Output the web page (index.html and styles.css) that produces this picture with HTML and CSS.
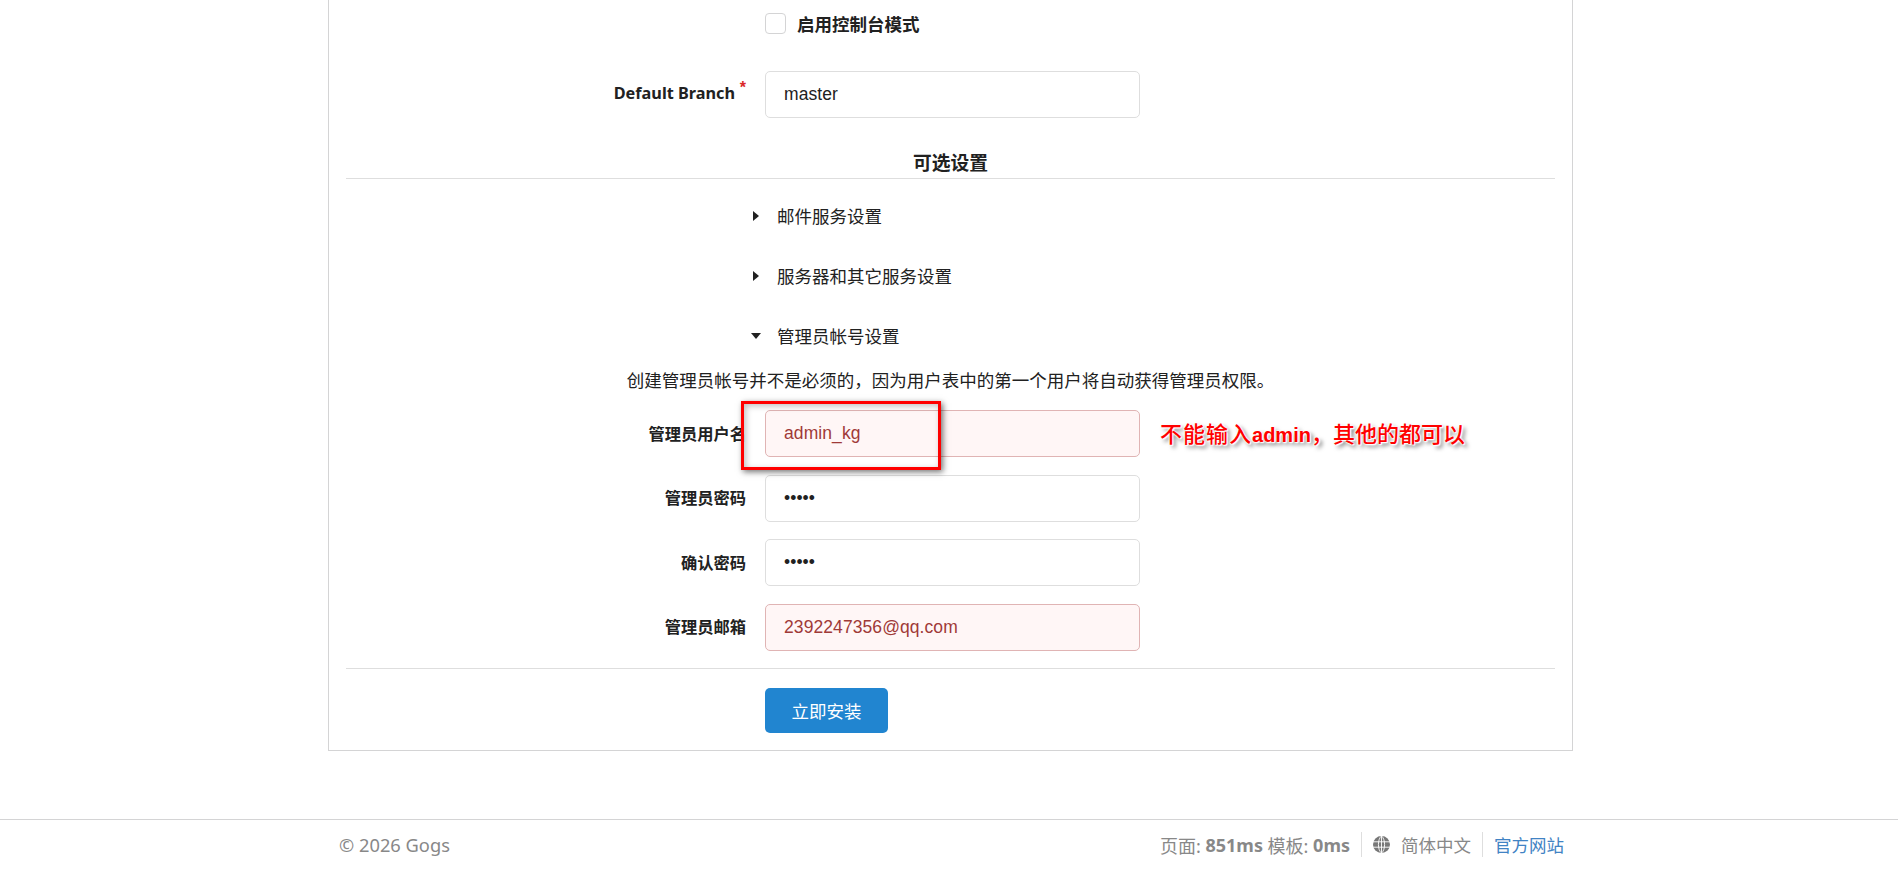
FILE: index.html
```html
<!DOCTYPE html>
<html lang="zh-CN">
<head>
<meta charset="utf-8">
<title>安装页面</title>
<link rel="stylesheet" href="styles.css">
</head>
<body>
<main class="card">
  <form class="form">
    <div class="row check-row">
      <span class="label-col"></span>
      <label class="check"><span class="box"></span><span>启用控制台模式</span></label>
    </div>
    <div class="row branch-row">
      <label class="label-col required">Default Branch<span class="star">*</span></label>
      <input class="input" type="text" value="master">
    </div>
    <h3 class="section-title">可选设置</h3>
    <div class="fold first">
      <svg class="tri" width="10" height="12" viewBox="0 0 10 12"><path d="M2 1l6 5-6 5z"/></svg>
      <span>邮件服务设置</span>
    </div>
    <div class="fold">
      <svg class="tri" width="10" height="12" viewBox="0 0 10 12"><path d="M2 1l6 5-6 5z"/></svg>
      <span>服务器和其它服务设置</span>
    </div>
    <div class="fold">
      <svg class="tri" width="10" height="12" viewBox="0 0 10 12"><path d="M0 3h10L5 9z"/></svg>
      <span>管理员帐号设置</span>
    </div>
    <p class="helper">创建管理员帐号并不是必须的，因为用户表中的第一个用户将自动获得管理员权限。</p>
    <div class="admin">
      <div class="row field">
        <label class="label-col">管理员用户名</label>
        <input class="input error" type="text" value="admin_kg">
      </div>
      <div class="row field">
        <label class="label-col">管理员密码</label>
        <input class="input" type="password" value="admin">
      </div>
      <div class="row field">
        <label class="label-col">确认密码</label>
        <input class="input" type="password" value="admin">
      </div>
      <div class="row field">
        <label class="label-col">管理员邮箱</label>
        <input class="input error" type="text" value="2392247356@qq.com">
      </div>
      <div class="mark"></div>
      <div class="note"><span class="note-head">不能输入</span><b>admin</b>，其他的都可以</div>
    </div>
    <div class="actions">
      <button class="btn" type="button">立即安装</button>
    </div>
  </form>
</main>
<footer class="footer">
  <div class="footer-inner">
    <span class="copy">© 2026 Gogs</span>
    <div class="footer-right">
      <span class="cell stats">页面: <b>851ms</b> 模板: <b>0ms</b></span>
      <span class="cell lang">
        <svg class="globe" width="17" height="17" viewBox="0 0 17 17">
          <circle cx="8.5" cy="8.5" r="8.5" fill="#777"/>
          <path d="M0 5.8h17M0 11.2h17M8.5 0v17M8.5 0C4.4 3 4.4 14 8.5 17M8.5 0c4.1 3 4.1 14 0 17" fill="none" stroke="#fff" stroke-width=".9"/>
        </svg>
        <span>简体中文</span>
      </span>
      <a class="cell link" href="#">官方网站</a>
    </div>
  </div>
</footer>
</body>
</html>
```

FILE: styles.css
```css
html, body {
  margin: 0;
  height: 869px;
  overflow: hidden;
  background: #fff;
}

body {
  font-family: "Noto Sans", "Noto Sans CJK SC", sans-serif;
  font-size: 17.5px;
  color: #212121;
}

.card {
  box-sizing: border-box;
  width: 1245px;
  height: 751px;
  margin: 0 0 0 328px;
  padding: 13px 17px 0;
  border: 1px solid #d4d4d5;
  border-top: 0;
}

.row {
  display: grid;
  grid-template-columns: 400px 375px;
  column-gap: 19px;
  align-items: center;
}

.label-col {
  font-size: 16.25px;
  font-weight: 700;
  text-align: right;
  color: #212121;
  line-height: 20px;
}

.check {
  display: flex;
  align-items: center;
  gap: 11px;
  font-weight: 700;
  height: 20px;
}

.box {
  box-sizing: border-box;
  width: 21px;
  height: 21px;
  border: 1px solid #d4d4d5;
  border-radius: 4px;
}

.branch-row {
  margin-top: 38px;
}

.required {
  position: relative;
  padding-right: 11px;
  top: -2px;
}

.star {
  position: absolute;
  right: 0;
  top: -4px;
  color: #db2828;
  font: 700 16px "Liberation Sans", sans-serif;
}

.input {
  box-sizing: border-box;
  width: 375px;
  height: 47px;
  padding: 0 18px;
  font: 17.5px "Liberation Sans", sans-serif;
  letter-spacing: .08px;
  color: #212121;
  background: #fff;
  border: 1px solid #dedede;
  border-radius: 5px;
  outline: 0;
}

.input.error {
  color: #9f3a38;
  background: #fff6f6;
  border-color: #e0b4b4;
}

.section-title {
  margin: 31px 0 0;
  height: 29px;
  font-size: 18.75px;
  line-height: 28px;
  font-weight: 700;
  text-align: center;
  color: #212121;
  border-bottom: 1px solid #dedede;
}

.fold {
  display: flex;
  align-items: center;
  gap: 16px;
  height: 24px;
  margin: 36px 0 0 405px;
  line-height: 24px;
}

.fold.first {
  margin-top: 25px;
}

.tri {
  flex: none;
  fill: #212121;
}

.helper {
  margin: 20px 0 0;
  height: 24px;
  line-height: 24px;
  text-align: center;
}

.admin {
  position: relative;
  margin-top: 18px;
}

.field + .field {
  margin-top: 17.67px;
}

.mark {
  position: absolute;
  left: 395px;
  top: -9px;
  box-sizing: border-box;
  width: 200px;
  height: 69px;
  border: 3px solid #f00;
  box-shadow: 2px 2px 6px rgba(0, 0, 0, .55), inset 2px 2px 6px rgba(0, 0, 0, .25);
}

.note {
  position: absolute;
  left: 814px;
  top: 7px;
  font-size: 22px;
  line-height: 32px;
  font-weight: 500;
  color: #f00;
  white-space: nowrap;
  text-shadow: 0 0 2px #fff, 0 0 2px #fff, 0 0 3px #fff, 1px 1px 1px #fff, 3px 3px 4px rgba(0, 0, 0, .6);
}

.note-head {
  letter-spacing: 1px;
}

.note b {
  font: 700 20px "Liberation Sans", sans-serif;
}

.actions {
  margin-top: 17px;
  padding: 19px 0 0 419px;
  border-top: 1px solid #dedede;
}

.btn {
  display: block;
  width: 123px;
  height: 45px;
  padding: 0;
  font: 17.5px "Noto Sans", "Noto Sans CJK SC", sans-serif;
  color: #fff;
  background: #2185d0;
  border: 0;
  border-radius: 5px;
}

.footer {
  margin-top: 68px;
  border-top: 1px solid #d4d4d5;
  color: #888;
}

.footer-inner {
  box-sizing: border-box;
  display: flex;
  justify-content: space-between;
  align-items: center;
  width: 1245px;
  height: 49px;
  margin-left: 328px;
  padding: 0 9px 0 11px;
}

.copy {
  font-size: 18.3px;
}

.footer-right {
  display: flex;
  align-items: center;
}

.cell {
  display: flex;
  align-items: center;
  height: 25px;
  padding: 0 11px;
  border-right: 1px solid #dedede;
}

.stats {
  white-space: pre;
  font-size: 18px;
}

.cell b {
  font-weight: 700;
}

.lang {
  gap: 11px;
}

.link {
  padding-right: 0;
  color: #4183c4;
  text-decoration: none;
  border-right: 0;
}

.globe {
  flex: none;
}
```
